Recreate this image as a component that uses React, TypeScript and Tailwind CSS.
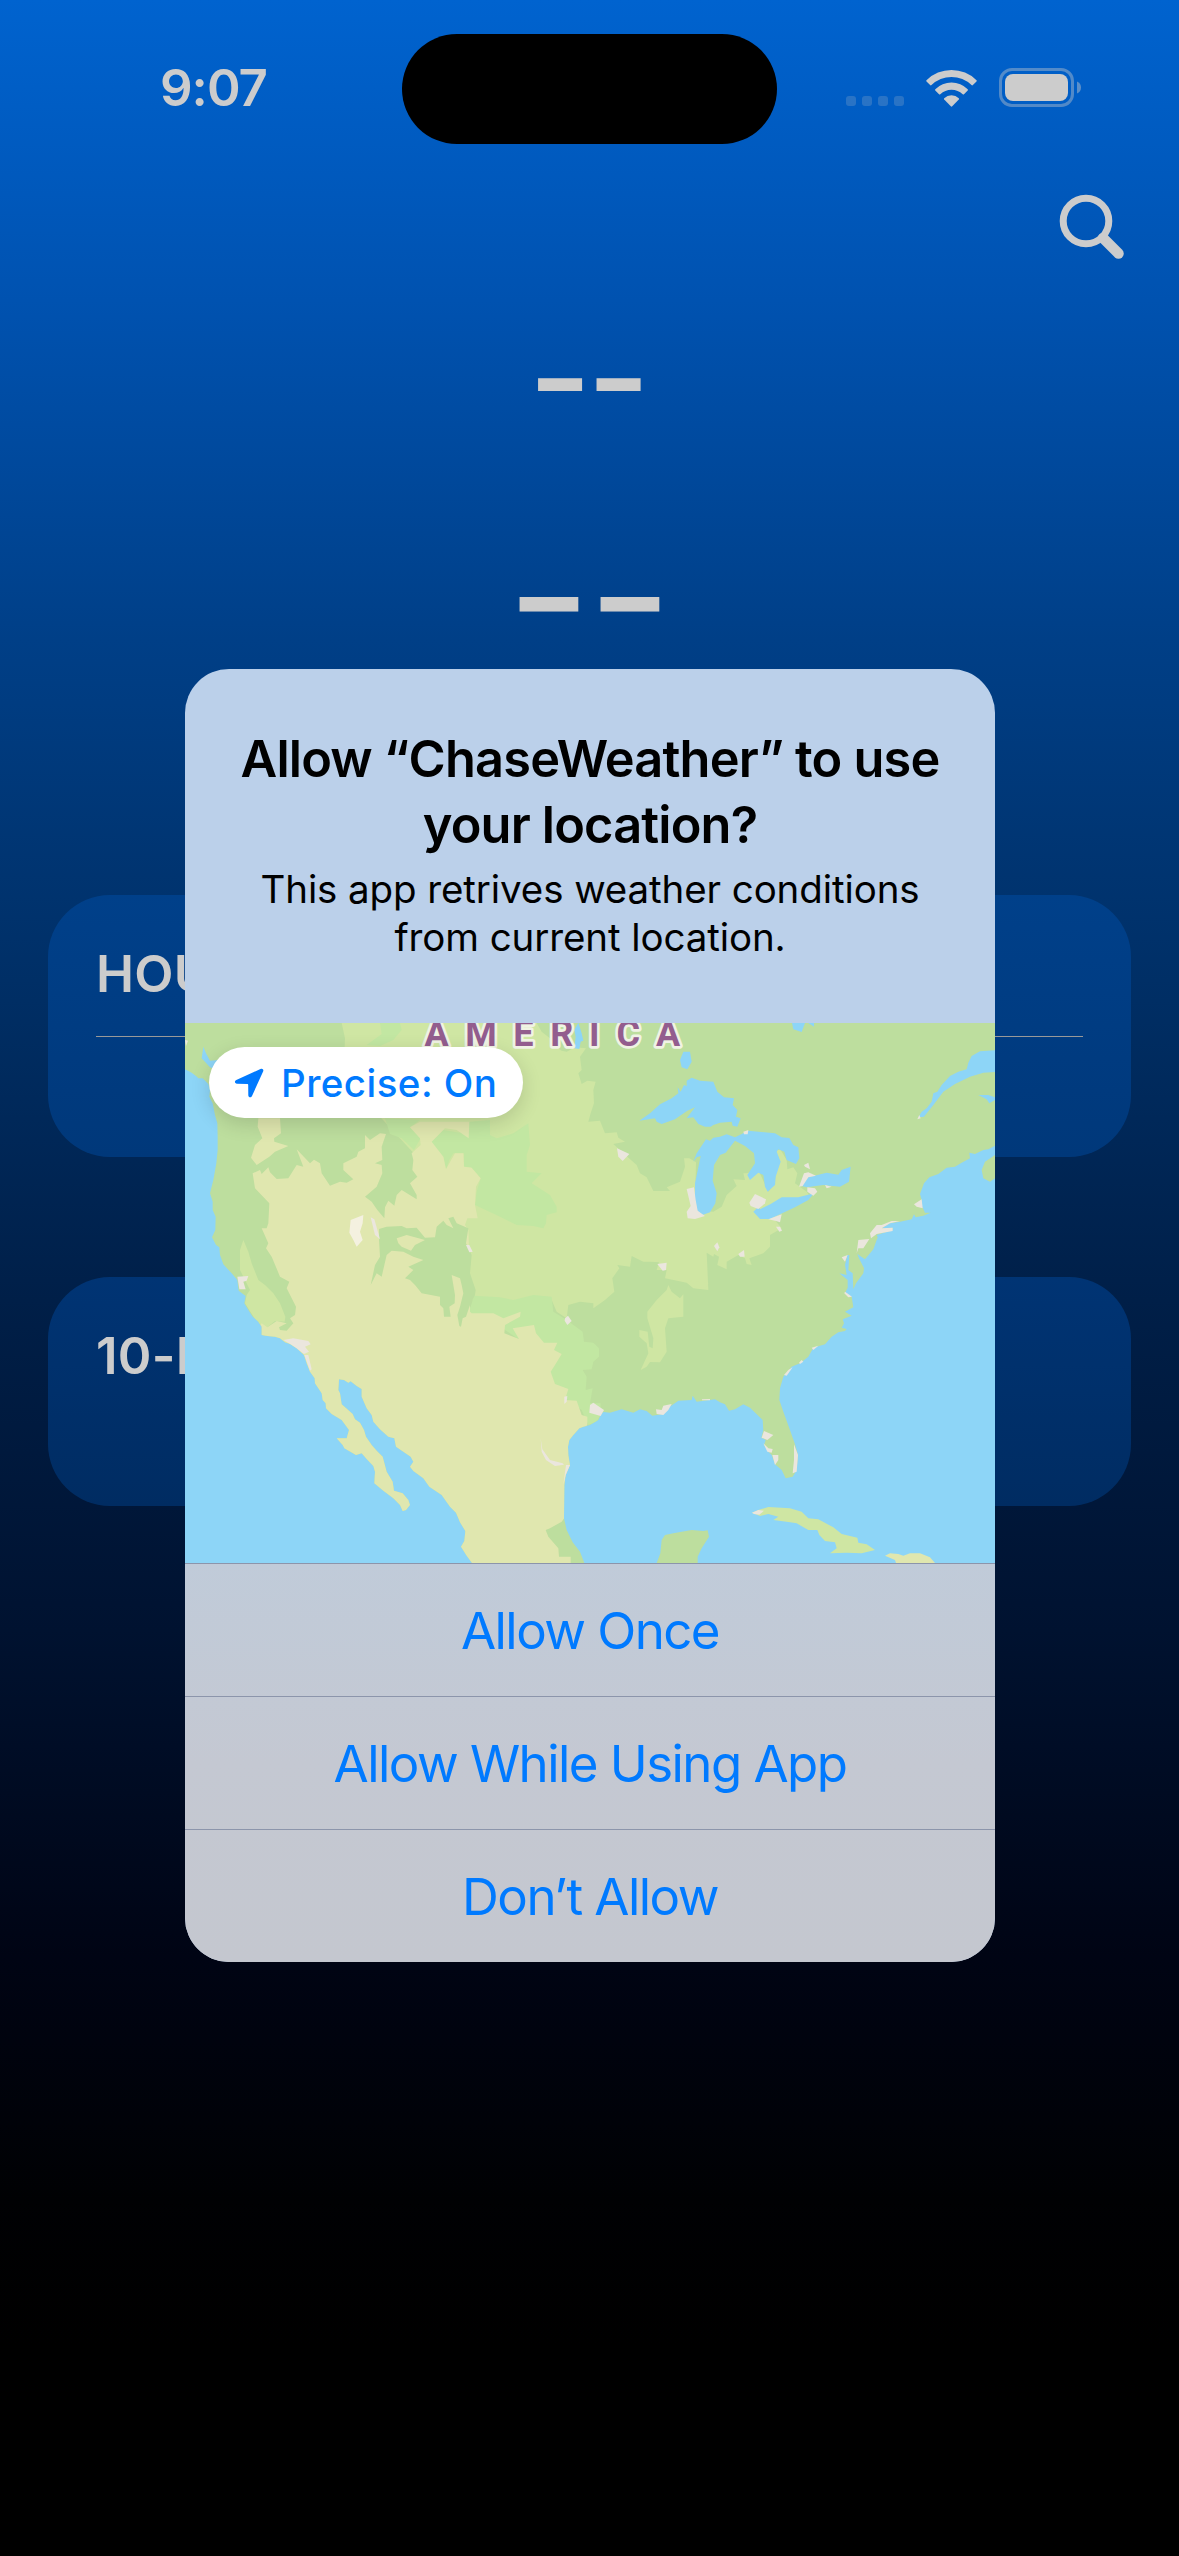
import type { ReactNode } from "react";

const LAND =
  "15,39 15,178 35,188 48,198 55,205 68,205 85,222 90,240 88,260 98,280 105,315 112,340 113,380 113,420 109,460 100,510 90,550 98,575 98,600 107,620 106,660 96,682 108,705 118,712 120,735 130,763 155,790 172,810 176,842 197,858 193,880 205,900 218,920 235,935 245,950 245,975 262,978 285,980 300,985 315,997 330,1002 350,1015 372,1035 380,1060 390,1085 404,1105 405,1120 425,1150 428,1170 437,1180 438,1195 455,1212 485,1230 507,1260 500,1285 470,1285 488,1305 493,1315 528,1335 545,1330 560,1347 580,1368 585,1385 583,1420 610,1442 640,1465 660,1485 668,1503 678,1500 690,1485 685,1470 668,1450 642,1442 638,1415 620,1385 608,1340 590,1322 575,1305 558,1280 552,1260 540,1238 525,1228 518,1212 485,1183 480,1150 475,1140 477,1108 492,1110 505,1118 512,1114 530,1128 545,1137 545,1160 560,1195 575,1215 580,1235 600,1258 625,1280 643,1285 648,1310 670,1325 692,1340 700,1355 690,1370 700,1383 730,1405 748,1430 785,1455 810,1490 828,1508 840,1537 856,1563 853,1593 843,1610 860,1637 876,1659 1213,1659 1200,1625 1178,1597 1160,1560 1152,1525 1153,1425 1157,1395 1170,1365 1165,1335 1164,1310 1168,1290 1180,1275 1198,1255 1210,1250 1230,1245 1255,1230 1262,1215 1270,1206 1290,1208 1325,1198 1360,1208 1380,1198 1400,1203 1417,1217 1450,1212 1465,1193 1495,1172 1535,1170 1538,1157 1550,1175 1605,1168 1620,1177 1635,1183 1647,1202 1665,1198 1690,1183 1710,1193 1748,1230 1750,1260 1744,1283 1757,1290 1752,1305 1765,1325 1775,1335 1785,1363 1805,1380 1817,1405 1838,1400 1850,1380 1854,1335 1845,1303 1828,1255 1810,1205 1798,1170 1800,1135 1810,1100 1835,1070 1860,1060 1885,1040 1900,1013 1935,1003 1955,980 1975,967 1995,963 2000,957 1985,953 1992,940 1988,928 2015,917 1995,905 2010,897 2020,892 2015,860 1995,850 2003,833 2003,810 1978,790 2000,795 1995,765 2002,735 2008,735 2005,780 2018,790 2020,838 2028,820 2050,790 2052,775 2037,745 2032,732 2055,748 2080,718 2093,682 2090,675 2138,660 2138,653 2105,655 2130,640 2160,635 2195,628 2202,613 2207,622 2230,617 2252,608 2235,608 2222,580 2225,570 2220,552 2232,520 2248,502 2275,492 2300,473 2325,470 2345,458 2370,445 2368,428 2385,432 2410,420 2425,418 2445,407 2445,39";

const FOREST = "#bdde9e";
const PLAINS = "#cfe6a3";
const DESERT = "#e0e7af";
const STEPPE = "#c2e7a2";
const WATER = "#8dd5f7";
const URBAN = "#ebe6de";

const plains = [
  "485,39 1070,39 1085,65 1110,85 1120,105 1145,122 1160,125 1185,112 1218,115 1200,140 1205,180 1195,190 1205,222 1222,212 1247,215 1240,240 1242,280 1232,310 1225,335 1260,332 1275,370 1310,367 1315,383 1335,395 1300,402 1330,430 1370,465 1380,490 1400,502 1420,543 1470,543 1460,532 1500,515 1515,470 1512,445 1528,445 1548,457 1545,600 1600,605 1625,590 1640,555 1670,528 1660,508 1695,510 1690,490 1700,490 1735,480 1765,545 1785,520 1790,440 1790,420 1802,420 1820,450 1822,478 1840,472 1852,490 1845,520 1880,545 1890,560 1780,625 1805,655 1770,675 1770,710 1750,730 1708,745 1715,765 1700,762 1695,745 1675,735 1640,755 1640,778 1612,765 1617,740 1602,732 1600,740 1580,728 1585,840 1540,835 1520,818 1455,805 1460,780 1430,780 1437,757 1412,755 1390,755 1355,738 1350,770 1312,765 1318,775 1297,805 1303,845 1275,870 1240,895 1240,880 1200,875 1165,885 1160,925 1130,905 1115,870 1000,880 870,870 870,780 865,700 850,640 800,560 720,450 600,320 490,200 495,85",
  "190,690 205,725 215,760 235,810 255,825 280,850 300,880 316,920 314,935 285,933 262,952 235,943 195,880 200,855 210,840 180,780 180,720",
  "1465,825 1475,845 1500,865 1510,853 1510,920 1465,925 1455,955 1460,1025 1440,1057 1410,1056 1400,1070 1382,1080 1405,1030 1400,1000 1378,980 1378,960 1403,965 1408,1010 1418,1015 1420,985 1402,925 1402,905 1430,870 1460,840",
  "1530,810 1585,820 1580,832 1550,835",
];

const steppe = [
  "600,39 660,39 665,60 640,90 600,108 560,105 605,72",
  "615,325 720,330 690,352 722,385 702,420 665,385 630,372",
  "750,400 790,360 840,368 870,335 930,330 930,375 950,385 1000,370 1045,340 1050,405 1040,435 1040,485 1085,490 1055,520 1110,555 1130,590 1130,607 1100,615 1098,640 1090,655 1060,648 1010,645 960,620 885,585 890,545 902,505 872,472 852,470 852,430 820,430 808,450 798,478 790,440 760,420",
  "882,857 960,862 1000,870 1060,855 1115,860 1120,905 1160,930 1208,965 1212,995 1240,998 1257,1015 1257,1040 1240,1055 1235,1078 1208,1080 1220,1100 1217,1140 1238,1135 1230,1180 1262,1180 1262,1215 1250,1235 1225,1245 1205,1200 1150,1160 1050,1010 960,950 865,925 860,905 872,890",
];

const desert = [
  "235,325 300,325 303,370 282,385 283,395 325,408 285,425 268,440 230,465 213,443 225,405 247,385 233,350",
  "218,490 240,480 245,492 265,472 270,487 290,507 325,505 350,465 370,470 350,418 390,460 402,449 420,460 425,490 450,527 480,515 500,518 520,508 490,480 490,460 530,440 535,425 555,415 555,375 570,390 600,370 618,372 605,410 607,450 585,460 605,465 607,490 590,530 555,560 575,575 592,600 613,625 615,592 625,572 643,587 650,555 665,540 710,568 710,555 690,520 712,500 697,480 700,450 695,430 722,405 720,385 690,352 720,335 868,335 866,385 830,360 795,355 755,395 790,440 798,478 808,460 825,430 850,430 852,470 875,473 902,505 888,530 885,585 893,625 862,625 855,645 865,660 870,780 870,830 870,905 875,910 940,910 970,925 1022,905 1020,920 975,945 973,970 1017,987 998,955 1062,945 1068,970 1092,998 1132,998 1122,1020 1145,1032 1125,1065 1112,1085 1125,1122 1165,1137 1155,1170 1190,1172 1205,1215 1222,1220 1222,1245 1170,1300 1170,1500 1145,1535 1110,1555 1097,1560 1105,1580 1135,1615 1137,1640 1172,1640 1172,1659 600,1659 200,1000 245,940 262,952 290,933 320,940 297,952 300,960 320,962 340,940 330,925 345,915 348,890 320,835 328,815 300,800 275,740 258,715 265,700 245,655 260,655 265,640 268,580 225,535",
];

const forestPatches = [
  "597,657 620,650 665,648 680,655 710,653 735,683 765,682 770,650 790,632 800,645 820,655 805,625 820,620 830,640 865,655 858,700 875,735 870,790 887,840 885,855 870,885 858,920 848,925 843,950 838,948 832,915 840,890 850,850 845,825 840,805 815,795 825,855 824,880 808,890 812,920 792,920 790,895 780,885 780,860 725,850 705,825 690,810 675,805 700,780 685,770 730,750 700,740 670,725 635,722 620,735 605,800 590,790 572,825 585,765 600,740 597,690",
];

const desertIslands = ["650,685 680,675 735,690 705,705 693,722 665,710 655,700"];

const lakes = [
  "70,110 78,130 90,152 115,150 110,180 90,172 65,145",
  "1378,332 1410,310 1440,283 1475,265 1495,250 1493,232 1502,245 1512,225 1520,228 1520,212 1535,203 1560,212 1600,215 1612,245 1632,262 1662,265 1658,285 1672,300 1668,320 1682,325 1672,350 1658,347 1655,335 1620,338 1600,345 1592,350 1575,350 1555,342 1540,322 1520,325 1545,292 1522,302 1485,328 1445,342 1430,335 1425,325",
  "1540,455 1550,430 1560,415 1578,388 1590,392 1600,383 1620,380 1640,373 1665,382 1705,362 1785,370 1805,382 1828,384 1840,405 1855,412 1858,445 1848,462 1820,450 1813,425 1795,418 1790,425 1802,455 1787,500 1785,525 1763,545 1755,530 1750,495 1735,488 1710,510 1702,495 1725,460 1722,430 1695,408 1665,392 1655,405 1637,428 1620,435 1602,465 1598,512 1610,550 1606,580 1590,607 1565,616 1552,602 1545,570 1545,520 1562,438 1550,442",
  "1720,605 1735,590 1740,598 1772,582 1805,562 1855,562 1902,550 1885,570 1845,592 1800,613 1770,627 1740,627",
  "1865,528 1885,502 1940,488 1975,494 1985,480 2012,470 2007,515 1980,530 1930,525 1880,532",
  "1183,115 1187,80 1183,60 1195,38 1205,70 1210,92 1202,95 1198,117",
  "1510,125 1530,125 1535,155 1522,178 1505,172 1500,150",
  "1836,39 1875,39 1865,66 1840,58",
  "1885,39 1902,39 1902,50",
  "2445,121 2400,124 2375,138 2365,158 2360,178 2335,185 2310,198 2285,225 2272,245 2260,250 2255,275 2240,295 2225,305 2215,322 2232,320 2260,285 2290,245 2325,222 2370,200 2410,188 2445,186",
  "2395,255 2425,255 2445,262 2445,270 2428,280 2420,268",
];

const urban = [
  "15,90 24,92 18,108",
  "310,990 340,985 385,993 392,1003 375,1010 387,1025 372,1032 350,1015 332,1003",
  "373,1035 385,1035 395,1078 390,1082",
  "172,800 205,798 200,812 190,815 197,838 178,838",
  "572,622 583,628 600,688 585,675",
  "1311,415 1348,432 1328,453 1315,440",
  "1520,537 1542,532 1547,570 1553,602 1575,618 1545,627 1523,625 1520,605 1532,588",
  "858,705 868,705 878,725 868,727",
  "1432,762 1460,758 1458,780 1448,782",
  "1602,708 1612,697 1618,712 1612,724",
  "1230,1185 1240,1178 1272,1200 1262,1218 1228,1208",
  "1155,925 1164,917 1175,933 1162,945 1154,932",
  "1082,1285 1087,1318 1110,1350 1148,1360 1152,1364 1125,1368 1098,1350 1085,1325",
  "1153,1160 1162,1158 1160,1175 1153,1182",
  "1158,1365 1170,1365 1157,1395 1150,1425",
  "1428,1198 1445,1200 1450,1187 1475,1182 1465,1200 1450,1215 1430,1212",
  "1566,1168 1590,1167 1590,1171 1566,1171",
  "1690,365 1705,360 1703,373 1692,373",
  "1708,578 1725,552 1758,568 1755,580 1735,597 1712,588",
  "1857,530 1872,490 1885,487 1908,497 1885,502 1868,528",
  "1872,465 1885,458 1890,478 1875,470",
  "1882,532 1905,535 1912,545 1900,557 1882,545",
  "1765,628 1805,613 1800,637 1788,633",
  "1788,650 1800,650 1806,662 1798,665",
  "1675,732 1692,720 1694,740 1680,740",
  "1935,525 1955,530 1940,535",
  "2070,670 2090,645 2105,645 2135,633 2160,633 2130,640 2105,655 2138,653 2138,663 2090,672 2073,685",
  "2035,690 2068,687 2050,715 2035,715 2030,730",
  "1985,742 2003,735 1995,755",
  "2202,583 2225,568 2228,595 2210,590",
  "2212,328 2218,315 2222,325",
  "1752,1263 1780,1275 1762,1290 1745,1283",
  "1750,1300 1765,1315 1778,1317 1775,1328 1762,1325",
  "1777,1335 1795,1335 1795,1350 1785,1365",
  "1842,1303 1854,1335 1850,1385 1838,1390 1842,1350",
  "1895,1013 1915,1007 1900,1020",
  "1812,1095 1825,1080 1838,1072 1820,1097",
  "1857,1058 1865,1050 1870,1055 1860,1062",
  "1995,845 2016,860 2005,862 1993,850",
];

const Shapes = ({ points, fill }: { points: string[]; fill: string }) => (
  <g fill={fill}>
    {points.map((p) => (
      <polygon key={p} points={p} />
    ))}
  </g>
);

function LocationMap() {
  return (
    <svg viewBox="15 39 2430 1620" className="block h-[540px] w-[810px]" aria-label="Map of North America">
      <defs>
        <clipPath id="land">
          <polygon points={LAND} />
        </clipPath>
      </defs>
      <rect x="15" y="39" width="2430" height="1620" fill={WATER} />
      <polygon points={LAND} fill={FOREST} />
      <g clipPath="url(#land)">
        <Shapes points={plains} fill={PLAINS} />
        <Shapes points={steppe} fill={STEPPE} />
        <Shapes points={desert} fill={DESERT} />
        <Shapes points={forestPatches} fill={FOREST} />
        <Shapes points={desertIslands} fill={DESERT} />
        <polygon points="512,630 550,615 548,640 540,665 548,690 530,710 520,690 508,668" fill="#f4f1e0" />
      </g>
      <Shapes points={lakes} fill={WATER} />
      <Shapes points={urban} fill={URBAN} />
      <polygon points="2445,435 2415,455 2405,480 2410,505 2430,515 2445,505" fill={FOREST} />
      <polygon
        points="1430,1659 1441,1630 1445,1590 1455,1575 1480,1570 1535,1560 1570,1563 1583,1561 1587,1580 1565,1615 1553,1640 1553,1659"
        fill={FOREST}
      />
      <polygon
        points="1716,1508 1735,1500 1765,1491 1830,1495 1865,1505 1885,1525 1915,1528 1960,1552 1985,1572 2032,1583 2035,1598 2060,1603 2085,1620 2045,1630 2000,1628 1950,1630 1970,1615 1965,1597 1935,1593 1918,1575 1912,1560 1885,1560 1850,1540 1820,1535 1780,1530 1795,1520 1765,1512 1740,1518"
        fill={PLAINS}
      />
      <polygon points="1716,1508 1735,1500 1752,1502 1738,1514 1722,1512" fill={URBAN} />
      <polygon
        points="2115,1637 2130,1630 2155,1632 2170,1637 2190,1630 2220,1630 2250,1642 2265,1659 2148,1659 2145,1650"
        fill={DESERT}
      />
      <text
        x="770 903 1030 1145 1243 1345 1464"
        y="109"
        textAnchor="middle"
        fontFamily="Roboto, sans-serif"
        fontSize="108"
        fontWeight="700"
        fill="#935d8e"
        stroke="#f0f3e4"
        strokeWidth="16"
        strokeLinejoin="round"
        paintOrder="stroke"
      >
        AMERICA
      </text>
    </svg>
  );
}

function StatusBar() {
  return (
    <header className="flex h-[144px] items-start">
      <div className="flex w-[402px] pl-[160px] pt-[57px]">
        <time className="text-[51px] leading-[62px] font-semibold tracking-[-1px]">9:07</time>
      </div>
      <div className="mt-[34px] h-[110px] w-[375px] rounded-full bg-black" />
      <svg viewBox="0 0 261 50" className="ml-[59px] mt-[63px] h-[50px] w-[261px]" fill="#cccccc">
        <g opacity="0.2">
          <rect x="10" y="33" width="10" height="10" rx="3" />
          <rect x="26" y="33" width="10" height="10" rx="3" />
          <rect x="42" y="33" width="10" height="10" rx="3" />
          <rect x="58" y="33" width="10" height="10" rx="3" />
        </g>
        <path d="M90.5 17.2a35.5 35.5 0 0 1 50 0a1 1 0 0 1 0 1.300l-3.600 3.600a1 1 0 0 1-1.400 0a28.500 28.500 0 0 0-40 0a1 1 0 0 1-1.400 0l-3.600-3.600a1 1 0 0 1 0-1.300z" />
        <path d="M99.300 26.200a23 23 0 0 1 32.400 0a1 1 0 0 1 0 1.300l-3.700 3.700a1 1 0 0 1-1.300 0a16 16 0 0 0-22.400 0a1 1 0 0 1-1.300 0l-3.700-3.700a1 1 0 0 1 0-1.300z" />
        <path d="M108.200 35.300a10.500 10.500 0 0 1 14.600 0a1 1 0 0 1 0 1.300l-6.600 6.700a1 1 0 0 1-1.400 0l-6.600-6.700a1 1 0 0 1 0-1.300z" />
        <rect x="164.500" y="6.500" width="72" height="36" rx="11.500" fill="none" stroke="#cccccc" strokeWidth="3" opacity="0.4" />
        <rect x="169" y="11" width="63" height="27" rx="8" />
        <path d="M241 18.500c2.500 1 4 3.300 4 6s-1.500 5-4 6z" opacity="0.450" />
      </svg>
    </header>
  );
}

function ForecastCard({ title, children, className }: { title: string; children?: ReactNode; className: string }) {
  return (
    <section className={`mx-12 rounded-[62px] px-12 pt-[48px] ${className}`}>
      <h2 className="w-[92px] overflow-hidden text-[51px] leading-[62px] font-semibold tracking-[0.3px] whitespace-nowrap">
        {title}
      </h2>
      {children}
    </section>
  );
}

function DialogButton({ label }: { label: string }) {
  return (
    <button className="flex h-[133px] w-full items-center justify-center border-t border-[#8c95ab] pt-[2px] text-[51px] leading-[62px] tracking-[-1.55px] text-[#007aff]">
      {label}
    </button>
  );
}

function PermissionDialog() {
  return (
    <div
      role="dialog"
      className="absolute left-[185px] top-[669px] w-[810px] overflow-hidden rounded-[44px] bg-[#bbd0ea] text-center text-black"
    >
      <div className="h-[354px] pt-[57px]">
        <h1 className="text-[50.5px] leading-[66px] font-semibold tracking-[-0.83px]">
          Allow “ChaseWeather” to use
          <br />
          your location?
        </h1>
        <p className="mt-[7px] text-[38.5px] leading-[48px] tracking-[-0.1px]">
          This app retrives weather conditions
          <br />
          from current location.
        </p>
      </div>
      <div className="relative">
        <LocationMap />
        <div className="absolute left-6 top-6 flex h-[71px] w-[314px] items-center rounded-full bg-white pl-[25px] text-[#007aff] shadow-[0_6px_20px_rgba(0,0,0,0.14)]">
          <svg viewBox="0 0 30 30" className="h-[30px] w-[30px]" fill="currentColor">
            <path d="M2.300 11.900L26.500 1c2-.8 3.500.7 2.600 2.600L18 28c-.9 2-3.600 1.500-3.700-.8l-.1-10.200c0-.7-.3-1-1-1L3 15.700C.5 15.600.2 12.900 2.300 11.900z" />
          </svg>
          <span className="ml-[17px] text-[38.5px] leading-[48px] font-medium tracking-[0.45px]">Precise: On</span>
        </div>
      </div>
      <div className="bg-linear-to-b from-[#c0cbd9] via-[#c4c8d2] via-50% to-[#c4c7cf]">
        <DialogButton label="Allow Once" />
        <DialogButton label="Allow While Using App" />
        <DialogButton label="Don’t Allow" />
      </div>
    </div>
  );
}

export default function App() {
  return (
    <main className="relative h-[2556px] w-[1179px] overflow-hidden bg-[linear-gradient(to_bottom,#0063cf_0px,#0052b0_300px,#003f87_640px,#002f66_980px,#001f48_1300px,#001230_1630px,#000414_1956px,#000103_2200px,#000000_2350px)] font-['Inter',sans-serif] text-[#cccccc]">
      <StatusBar />
      <div className="flex h-[120px] justify-end pr-[54px] pt-[50px]">
        <svg viewBox="0 0 66 66" className="h-[66px] w-[66px]" fill="none" stroke="#cccccc">
          <circle cx="27" cy="27" r="22.800" strokeWidth="7" />
          <path d="M44 44L59.500 59.500" strokeWidth="10.500" strokeLinecap="round" />
        </svg>
      </div>
      <div className="flex h-[631px] flex-col items-center">
        <p className="mt-[54px] -ml-[3px] h-[120px] scale-x-[1.23] text-[108px] leading-[120px] font-bold tracking-[-3px]">--</p>
        <p className="mt-[78px] -ml-[3px] h-[160px] scale-x-[1.3] text-[138px] leading-[160px] font-semibold tracking-[-2px]">--</p>
      </div>
      <ForecastCard title="HOURLY FORECAST" className="h-[262px] bg-linear-to-b from-[#00408a] to-[#00387a]">
        <div className="mt-[31px] h-px bg-[#999]" />
      </ForecastCard>
      <div className="h-[120px]" />
      <ForecastCard title="10-DAY FORECAST" className="h-[229px] bg-linear-to-b from-[#003474] to-[#002c62]" />
      <PermissionDialog />
    </main>
  );
}
